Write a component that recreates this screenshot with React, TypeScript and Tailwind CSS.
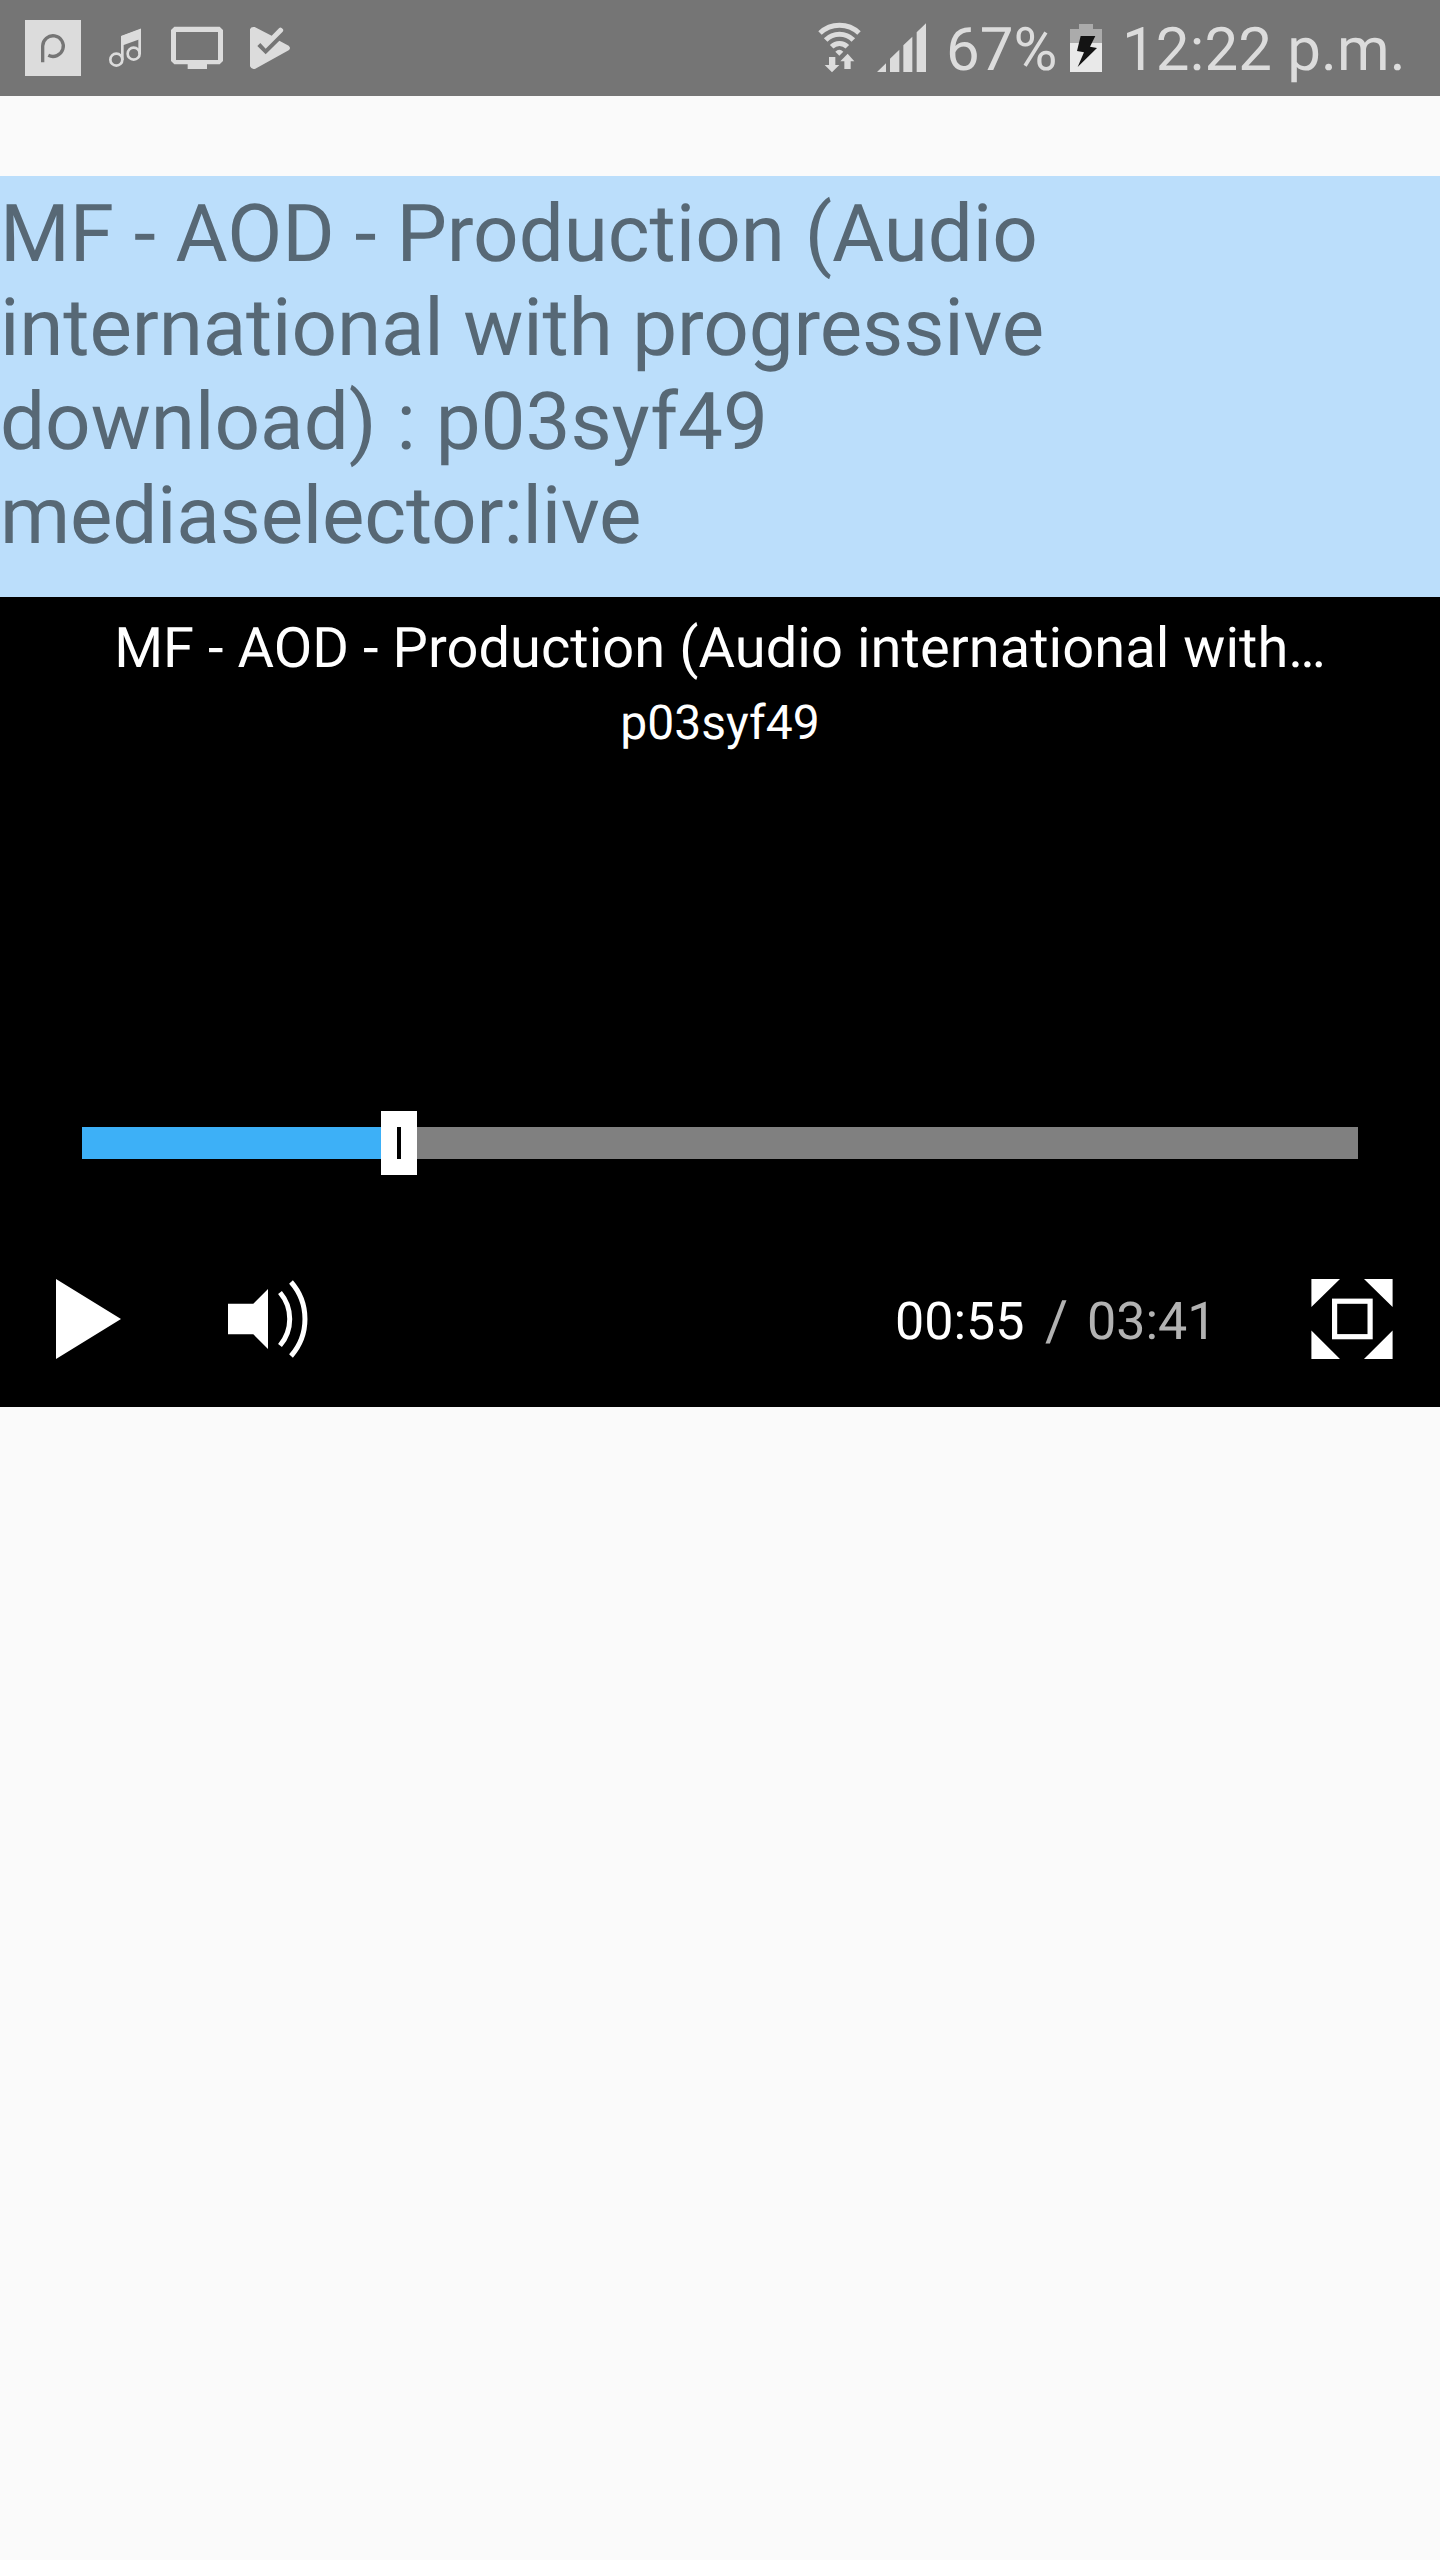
import type { ReactNode } from 'react';

const ELAPSED = '00:55';
const DURATION = '03:41';

/** Status bar glyph drawn in thirds of a pixel, as tall as the bar itself. */
function StatusIcon({ viewBox, className, children }: { viewBox: string; className: string; children: ReactNode }) {
  return (
    <svg viewBox={viewBox} className={`h-24 shrink-0 ${className}`} fill="#dcdcdc" aria-hidden="true">
      {children}
    </svg>
  );
}

function StatusBar() {
  return (
    <header className="flex h-24 items-center bg-[#757575] text-[#dcdcdc]">
      <StatusIcon viewBox="75 0 168 288" className="ml-[25px] w-14">
        <rect x="75" y="60" width="168" height="168" />
        <path d="M128 187 V138 A31 31 0 1 1 145 166" fill="none" stroke="#757575" strokeWidth="10" />
      </StatusIcon>
      <StatusIcon viewBox="324 0 102 288" className="ml-[27px] w-[34px]">
        <g fill="none" stroke="#dcdcdc" strokeWidth="8">
          <circle cx="349" cy="179" r="18" />
          <circle cx="401" cy="161" r="18" />
          <path d="M367 180 V111 L419 91 V162" />
        </g>
        <path d="M363 109 L423 87 V116 L371 135 H363 Z" />
      </StatusIcon>
      <StatusIcon viewBox="513 0 156 288" className="ml-[29px] w-[52px]">
        <path fillRule="evenodd" d="M523 80 H659 L669 90 V183 L659 193 H621 V207 H563 V193 H523 L513 183 V90 Z M528 96 V180 H654 V96 Z" />
      </StatusIcon>
      <StatusIcon viewBox="750 0 120 288" className="ml-[27px] w-10">
        <path d="M764 81 L815 107 L837 85 Q841 80 845 84 L849 88 Q851 92 848 95 L797 146 L781 129 L772 138 L797 163 L838 122 L866 137 Q874 144 866 151 L766 206 Q755 210 750 199 V88 Q753 79 764 81 Z" />
      </StatusIcon>

      <div className="ml-[528px] flex items-center">
        <StatusIcon viewBox="54 0 129 288" className="w-[43px]">
          <g fill="none" stroke="#dcdcdc" strokeWidth="15">
            <path d="M60 99 A85 85 0 0 1 177 99" />
            <path d="M77 120 A58 58 0 0 1 160 120" />
            <path d="M95 140 A33 33 0 0 1 142 140" />
          </g>
          <path d="M106 155 Q118 143 130 155 L118 167 Z" />
          <path d="M87 171 H106 V195 H118 L96 217 L74 195 H87 Z" />
          <path d="M143 161 L163 184 H152 V207 H133 V184 H121 Z" />
        </StatusIcon>
        <StatusIcon viewBox="231 0 147 288" className="ml-4 w-[49px]">
          <path d="M231 216 L258 190 V216 Z M270 216 V176 L298 149 V216 Z M310 216 V136 L337 110 V216 Z M350 216 V97 L378 70 V216 Z" />
        </StatusIcon>
        <span className="ml-5 w-[124px] pt-1 text-[60px] leading-24">67%</span>
        <StatusIcon viewBox="810 0 96 288" className="w-8">
          <path fill="#ababab" d="M837 72 H879 V87 H906 V130 H810 V87 H837 Z" />
          <path fill="#e9e9e9" d="M810 129 H906 V216 H810 Z" />
          <path fill="#141414" d="M842 108 H886 L870 140 L891 144 L833 201 L852 157 L831 153 Z" />
        </StatusIcon>
        <time className="ml-5 whitespace-nowrap pt-1 text-[60px] leading-24 tracking-[0.15px]">12:22 p.m.</time>
      </div>
    </header>
  );
}

function SeekBar() {
  return (
    <div className="mx-[82px] mt-[360px] flex h-16 items-center">
      <div className="h-8 w-[299px] bg-[#3db0f7]" />
      <div className="flex h-16 w-9 items-center justify-center bg-white">
        <div className="h-8 w-1 bg-black" />
      </div>
      <div className="h-8 flex-1 bg-[#808080]" />
    </div>
  );
}

function Controls() {
  return (
    <div className="mt-[104px] flex h-20 items-center">
      <button className="ml-14" aria-label="Play">
        <svg className="block h-20 w-[65px]" viewBox="0 0 65 80" fill="white">
          <path d="M0 0 L65 40 L0 80 Z" />
        </svg>
      </button>
      <button className="ml-[107px]" aria-label="Volume">
        <svg className="block h-20 w-20" viewBox="0 0 80 80" fill="white">
          <path d="M0 24.800 H25.300 L40 10 V70 L25.300 55.300 H0 Z" />
          <path d="M52 13.500 A41 41 0 0 1 52 66.500 M63 3 A56 56 0 0 1 63 77" fill="none" stroke="white" strokeWidth="5" />
        </svg>
      </button>
      <div className="ml-auto flex w-[317px] items-center pt-[6px] text-[52px] leading-[80px]">
        <span className="w-[148px] shrink-0 text-white">{ELAPSED}</span>
        <span className="-mt-0.5 w-11 shrink-0 pl-0.5 text-[56px] text-[#b2b2b2]">/</span>
        <span className="text-[#b2b2b2]">{DURATION}</span>
      </div>
      <button className="ml-[99px] mr-[47px]" aria-label="Full screen">
        <svg className="block h-20 w-[82px]" viewBox="0 0 82 80" fill="white">
          <path d="M0.400 0 H29 L0.400 28 Z M81.600 0 V28 L53 0 Z M0.400 80 V51.500 L29 80 Z M81.600 80 H53 L81.600 51.500 Z" />
          <rect x="23.600" y="22.200" width="35.500" height="35.500" fill="none" stroke="white" strokeWidth="5.200" />
        </svg>
      </button>
    </div>
  );
}

export default function App() {
  return (
    <div className="flex h-[2560px] w-[1440px] flex-col overflow-hidden bg-[#fafafa] font-['Roboto',sans-serif] [text-rendering:geometricPrecision]">
      <StatusBar />
      <h1 className="mt-20 h-[421px] bg-[#bbdefb] pt-[11px] text-[80px] leading-[94px] text-[#576875]">
        <span className="block tracking-[-0.05px]">MF - AOD - Production (Audio</span>
        <span className="block tracking-[-0.14px]">international with progressive</span>
        <span className="block">download) : p03syf49</span>
        <span className="block tracking-[-0.22px]">mediaselector:live</span>
      </h1>
      <section className="h-[810px] bg-black">
        <div className="flex flex-col items-center pt-[18px] text-white">
          <h2 className="h-[66px] text-[56px] leading-[66px] tracking-[0.05px]">MF - AOD - Production (Audio international with…</h2>
          <p className="mt-[13px] h-[57px] text-[48px] leading-[57px]">p03syf49</p>
        </div>
        <SeekBar />
        <Controls />
      </section>
    </div>
  );
}
